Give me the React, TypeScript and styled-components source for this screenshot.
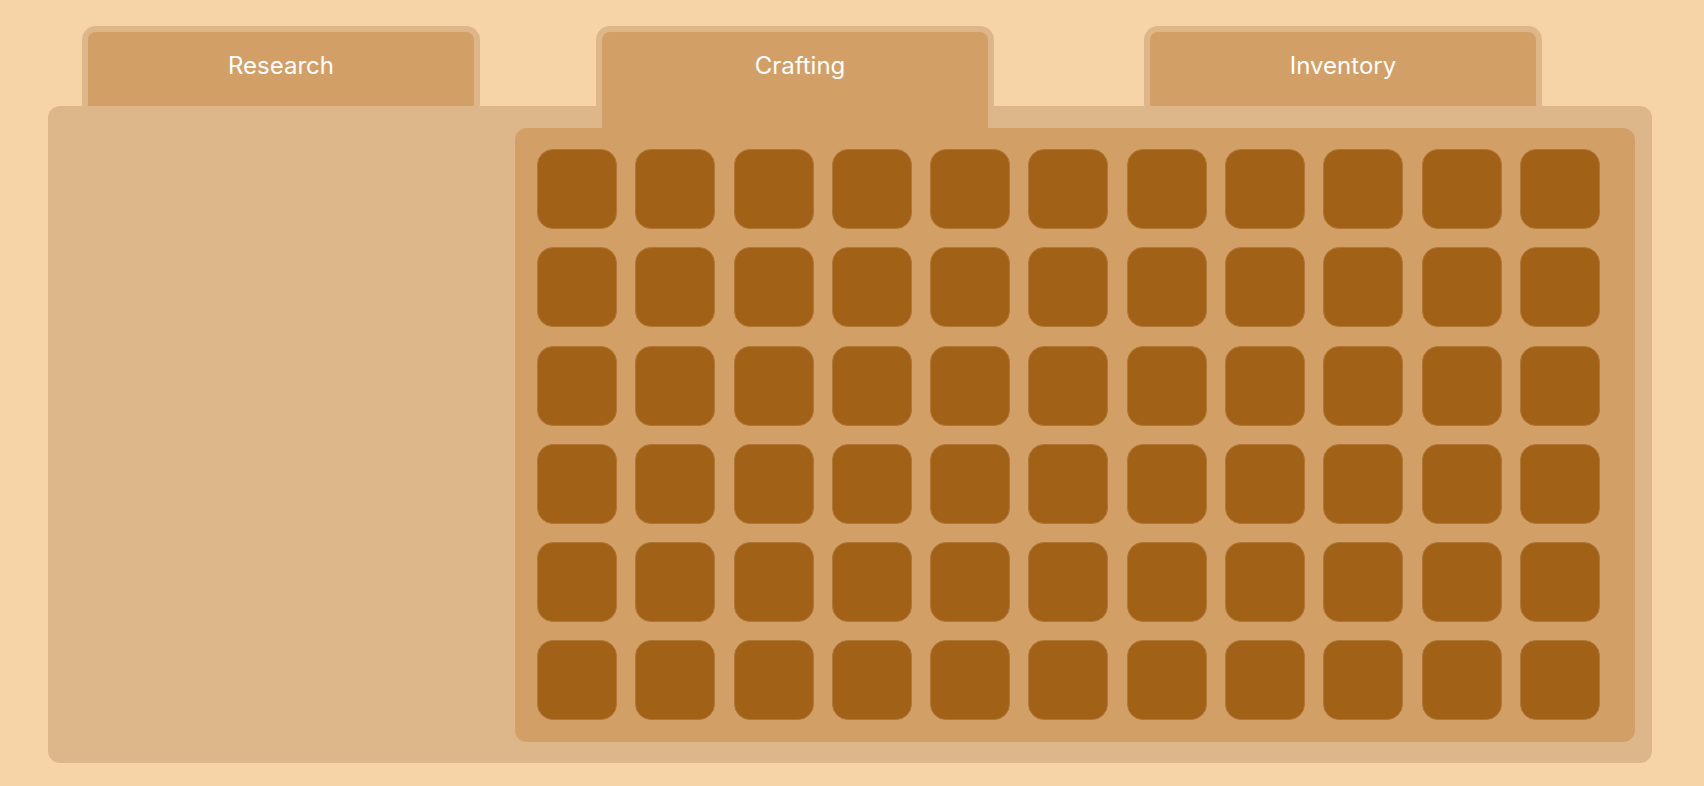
import React from "react";
import styled, { createGlobalStyle } from "styled-components";

const Global = createGlobalStyle`
  html, body { margin: 0; padding: 0; background: #f6d4a7; }
  body { font-family: Inter, "Noto Sans", sans-serif; }
`;

const Page = styled.div`
  width: 1704px;
  height: 786px;
  box-sizing: border-box;
  padding: 26px 52px 0 48px;
  background: #f6d4a7;
`;

const TabRow = styled.div`
  display: flex;
  align-items: flex-start;
  padding-left: 34px;
  height: 80px;
`;

const Tab = styled.div<{ $active?: boolean; $gapAfter?: number }>`
  position: relative;
  z-index: 1;
  box-sizing: border-box;
  width: 398px;
  height: ${(p) => (p.$active ? 102 : 80)}px;
  margin-right: ${(p) => p.$gapAfter ?? 0}px;
  background: #d2a066;
  border: 6px solid #ddb789;
  border-bottom: none;
  border-radius: 14px 14px 0 0;
  padding-top: 19px;
  padding-left: ${(p) => (p.$active ? 10 : 0)}px;
  text-align: center;
  color: #ffffff;
  font-size: 24px;
  line-height: 30px;
  font-weight: 400;
`;

const Panel = styled.div`
  display: flex;
  height: 657px;
  box-sizing: border-box;
  padding: 22px 17px 21px 0;
  background: #ddb789;
  border-radius: 12px;
`;

const SideColumn = styled.div`
  width: 467px;
  flex: none;
`;

const Grid = styled.div`
  flex: 1;
  display: grid;
  grid-template-columns: repeat(11, 80px);
  grid-auto-rows: 80px;
  gap: 18.3px;
  align-content: start;
  box-sizing: border-box;
  padding: 21px 22px 22px;
  background: #d2a066;
  border-radius: 12px;
`;

const Slot = styled.div`
  box-sizing: border-box;
  background: #a16218;
  border: 1px solid #b07635;
  border-radius: 16px;
`;

const tabs = [
  { label: "Research", gap: 116 },
  { label: "Crafting", gap: 150, active: true },
  { label: "Inventory", gap: 0 },
];

export default function App() {
  return (
    <>
      <Global />
      <Page>
        <TabRow>
          {tabs.map((t) => (
            <Tab key={t.label} $active={t.active} $gapAfter={t.gap}>
              {t.label}
            </Tab>
          ))}
        </TabRow>
        <Panel>
          <SideColumn />
          <Grid>
            {Array.from({ length: 66 }).map((_, i) => (
              <Slot key={i} />
            ))}
          </Grid>
        </Panel>
      </Page>
    </>
  );
}
